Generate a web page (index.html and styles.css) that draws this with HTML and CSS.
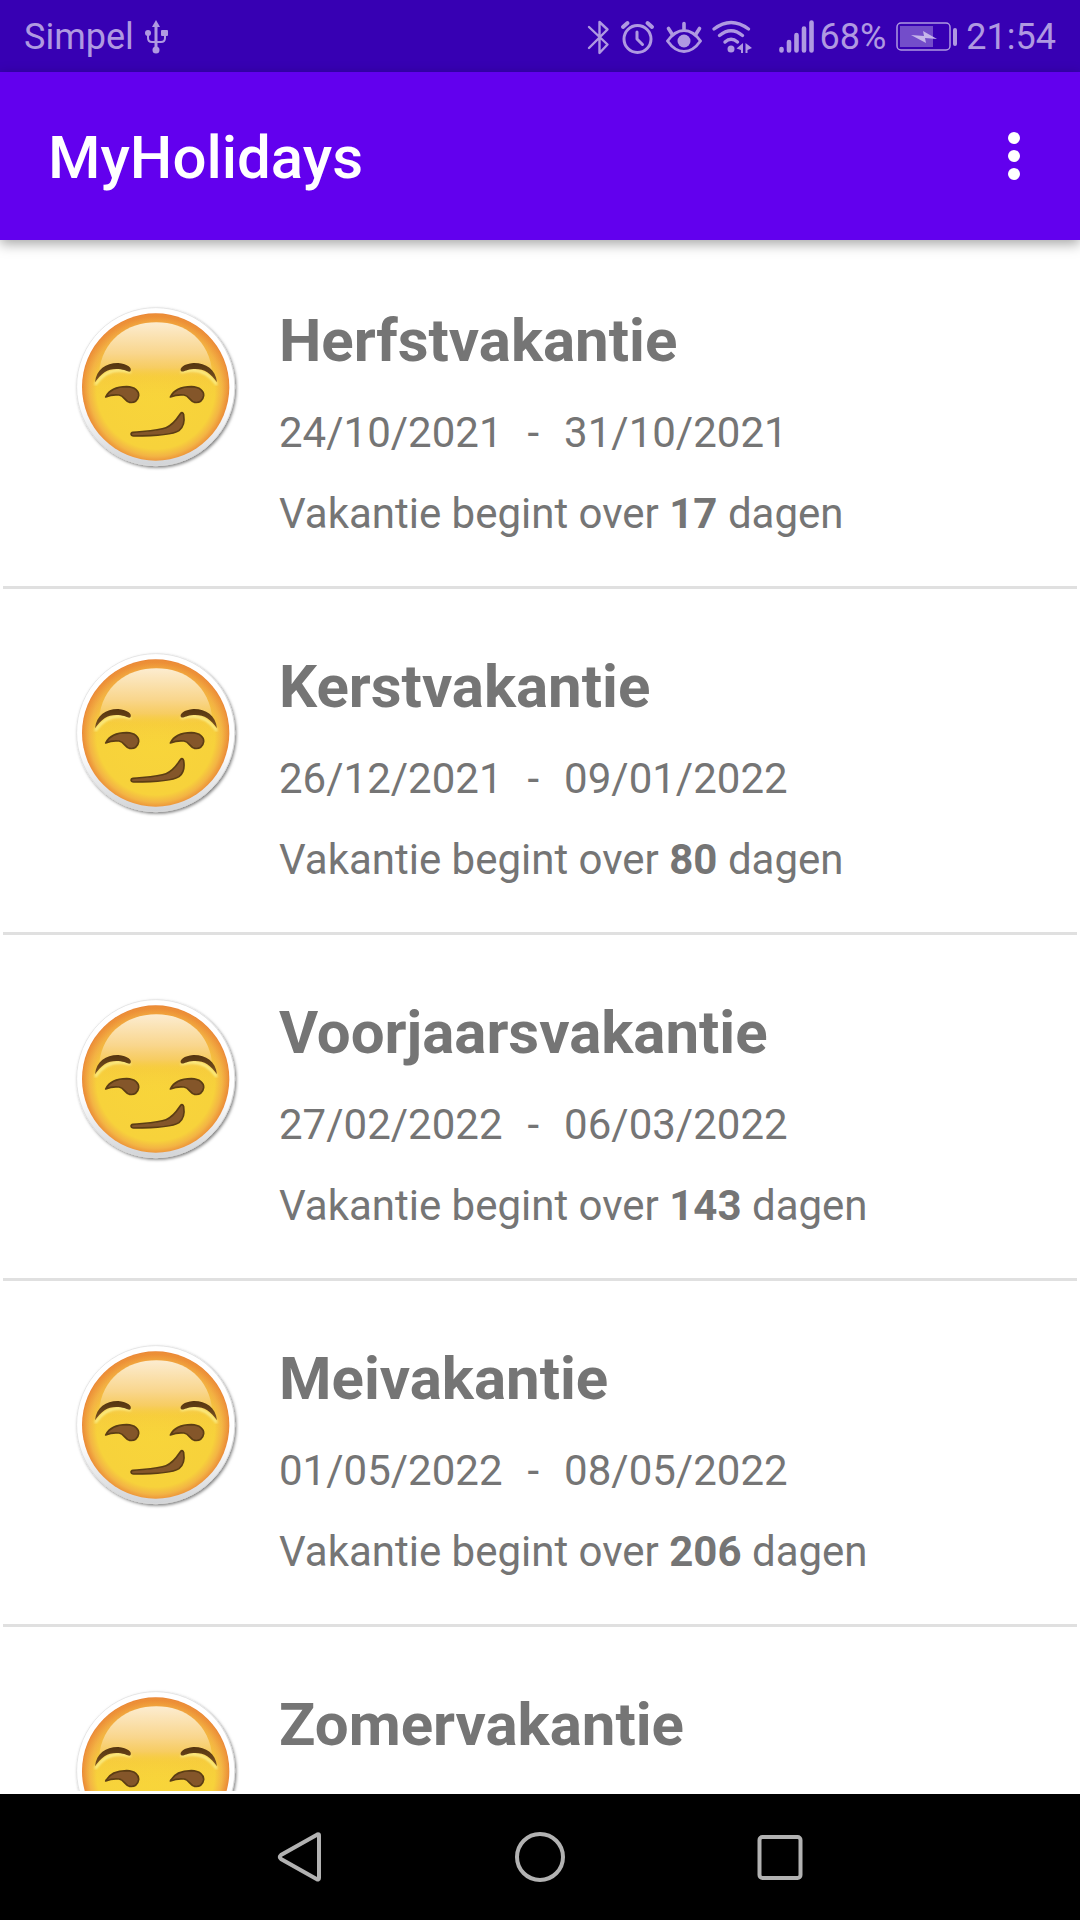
FILE: index.html
```html
<!DOCTYPE html>
<html lang="nl">
<head>
<meta charset="utf-8">
<meta name="viewport" content="width=device-width">
<title>MyHolidays</title>
<link rel="stylesheet" href="styles.css">
</head>
<body>
<svg class="defs" aria-hidden="true">
  <defs>
    <radialGradient id="skin" gradientUnits="userSpaceOnUse" cx="290" cy="300" r="221">
      <stop offset="0" stop-color="#f8d53a"/>
      <stop offset=".8" stop-color="#f7d23b"/>
      <stop offset=".9" stop-color="#f3b444"/>
      <stop offset="1" stop-color="#e98435"/>
    </radialGradient>
    <linearGradient id="forehead" x1="0" y1="0" x2="0" y2="1">
      <stop offset="0" stop-color="#f09a38" stop-opacity=".95"/>
      <stop offset=".35" stop-color="#f3ae42" stop-opacity=".7"/>
      <stop offset=".6" stop-color="#f7cb40" stop-opacity="0"/>
    </linearGradient>
    <linearGradient id="shine" x1="0" y1="0" x2="0" y2="1">
      <stop offset="0" stop-color="#fcecd0"/>
      <stop offset=".55" stop-color="#f9d68d"/>
      <stop offset=".8" stop-color="#f7cd66" stop-opacity=".9"/>
      <stop offset="1" stop-color="#f7cf40" stop-opacity="0"/>
    </linearGradient>
    <linearGradient id="rim" x1="0" y1="0" x2="0" y2="1">
      <stop offset=".6" stop-color="#fff"/>
      <stop offset="1" stop-color="#d2d4d7"/>
    </linearGradient>
    <linearGradient id="brow" x1="0" y1="0" x2="0" y2="1">
      <stop offset="0" stop-color="#54340f"/>
      <stop offset="1" stop-color="#7a5223"/>
    </linearGradient>
    <filter id="drop" x="-10%" y="-10%" width="120%" height="120%">
      <feDropShadow dx="4" dy="5" stdDeviation="4" flood-color="#000" flood-opacity=".5"/>
    </filter>
    <filter id="soft"><feGaussianBlur stdDeviation="3"/></filter>
  </defs>
  <symbol id="smirk" viewBox="36 39 504 504">
    <circle cx="290" cy="290" r="237" fill="url(#rim)" stroke="#dcdcdc" stroke-width="2" filter="url(#drop)"/>
    <circle cx="290" cy="291" r="221" fill="url(#skin)"/>
    <circle cx="290" cy="291" r="219" fill="url(#forehead)" opacity=".5"/>
    <path d="M120 250C128 150 205 97 292 97S452 150 460 250C410 272 170 272 120 250Z" fill="url(#shine)"/>
    <g fill="none" stroke="#fbf08a" stroke-width="7" stroke-linecap="round" filter="url(#soft)">
      <path d="M110 282Q150 226 213 246"/><path d="M368 246Q431 226 472 282"/>
    </g>
    <g fill="url(#brow)">
      <path d="M108 277C112 237 143 218 178 219C206 221 221 235 214 244C208 248 202 239 178 237C147 235 128 248 108 277Z"/>
      <path d="M474 277C470 237 439 218 403 219C375 221 360 235 366 243C372 248 380 239 403 237C434 235 454 248 474 277Z"/>
    </g>
    <g fill="#84562a" stroke="#5b3d14" stroke-width="5" stroke-linejoin="round">
      <path d="M140 321C151 299 176 290 203 290C229 291 240 303 239 317C237 333 226 339 212 337C198 335 196 317 180 315C164 313 154 315 140 321Z"/>
      <path d="M334 321C345 299 370 290 397 290C423 291 435 303 434 317C432 333 421 339 407 337C393 335 391 317 375 315C359 313 349 315 334 321Z"/>
      <path d="M222 427C260 423 298 422 321 413C345 403 354 386 364 371C369 365 373 368 374 375C377 393 373 412 360 422C340 435 270 438 224 438C214 438 214 428 222 427Z"/>
    </g>
  </symbol>
</svg>

<header class="status">
  <div class="status-group">
    <span>Simpel</span>
    <svg class="usb" width="24" height="36" viewBox="0 0 24 36" aria-hidden="true">
      <g fill="none" stroke="currentColor" stroke-width="2"><path d="M12 5V32" stroke-width="3"/><path d="M4 14V19Q4 23 8 23H17Q21 23 21 19V14"/></g>
      <g fill="currentColor"><path d="M12 1L16 8H8Z"/><circle cx="4" cy="14" r="3"/><rect x="17" y="11" width="7" height="6" rx="1"/><circle cx="12" cy="31" r="3.5"/></g>
    </svg>
  </div>
  <div class="status-group">
    <svg width="260" height="72" viewBox="0 0 260 72" class="signals" aria-hidden="true">
      <g fill="none" stroke="currentColor" stroke-linecap="round" stroke-linejoin="round" stroke-width="2.4">
        <path d="M19 26L37.500 43.500L29.500 52V21L37.500 28.500L19 47"/>
        <g stroke-width="3"><circle cx="67.500" cy="38" r="13.500"/><path d="M67 31V38L72.500 43.500"/><path d="M53 26L57.500 22M82 26L77.500 22" stroke-width="4"/></g>
        <g stroke-width="3"><path d="M97.500 40Q105 29.500 114 29.500T130.500 40Q123 50.500 114 50.500T97.500 40Z"/><path d="M114 28V22.500M102 33L98.500 27.500M126 33L129.500 27.500" stroke-width="3.600"/></g>
        <g stroke-width="3.400"><path d="M144 28Q161 15 178.500 28M149.500 34.500Q161 25 172.500 34.500M155 41Q161 35.500 167.500 41"/></g>
        <g stroke-width="4.600"><path d="M211.500 48V49.500M219 41V49.500M226.500 34V49.500M234 27.500V49.500M241.500 21.500V49.500"/></g>
      </g>
      <g fill="currentColor"><circle cx="114" cy="40" r="6.500"/><circle cx="161" cy="48" r="3.500"/><path d="M166.500 47.500L173 42V52H171V49ZM175.500 42L182 47L177.500 49V52H175.500Z"/></g>
    </svg>
    <span>68%</span>
    <svg class="battery" width="62" height="30" viewBox="0 0 62 30" aria-hidden="true">
      <rect x="1" y="1" width="53" height="27" rx="4" fill="none" stroke="currentColor" stroke-width="1.500"/>
      <rect x="4" y="4" width="33" height="21" fill="currentColor" opacity=".5"/>
      <path d="M15 13L28 14L27 9L41 17L29 16L30 21Z" fill="#c5b5ea"/>
      <rect x="57" y="6" width="4" height="18" rx="2" fill="currentColor"/>
    </svg>
    <span>21:54</span>
  </div>
</header>

<div class="appbar">
  <h1>MyHolidays</h1>
  <button class="more" type="button" aria-label="Meer opties">
    <svg width="12" height="48" viewBox="0 0 12 48" fill="currentColor" aria-hidden="true"><circle cx="6" cy="6" r="6"/><circle cx="6" cy="24" r="6"/><circle cx="6" cy="42" r="6"/></svg>
  </button>
</div>

<main class="content">
  <ul class="list">
    <li class="row">
      <svg class="face" aria-hidden="true"><use href="#smirk"/></svg>
      <div class="info"><h2>Herfstvakantie</h2><p class="dates"><span>24/10/2021</span><span>-</span><span>31/10/2021</span></p><p>Vakantie begint over <b>17</b> dagen</p></div>
    </li>
    <li class="row">
      <svg class="face" aria-hidden="true"><use href="#smirk"/></svg>
      <div class="info"><h2>Kerstvakantie</h2><p class="dates"><span>26/12/2021</span><span>-</span><span>09/01/2022</span></p><p>Vakantie begint over <b>80</b> dagen</p></div>
    </li>
    <li class="row">
      <svg class="face" aria-hidden="true"><use href="#smirk"/></svg>
      <div class="info"><h2>Voorjaarsvakantie</h2><p class="dates"><span>27/02/2022</span><span>-</span><span>06/03/2022</span></p><p>Vakantie begint over <b>143</b> dagen</p></div>
    </li>
    <li class="row">
      <svg class="face" aria-hidden="true"><use href="#smirk"/></svg>
      <div class="info"><h2>Meivakantie</h2><p class="dates"><span>01/05/2022</span><span>-</span><span>08/05/2022</span></p><p>Vakantie begint over <b>206</b> dagen</p></div>
    </li>
    <li class="row">
      <svg class="face" aria-hidden="true"><use href="#smirk"/></svg>
      <div class="info"><h2>Zomervakantie</h2></div>
    </li>
  </ul>
</main>

<nav class="navbar">
  <button type="button" aria-label="Terug"><svg width="50" height="50" viewBox="0 0 50 50" aria-hidden="true"><path d="M43.500 2.500Q44 2 44 4V46Q44 48.500 41.500 47L6 27Q3.500 25 6 23L41.500 3Q43 2 43.500 2.500Z"/></svg></button>
  <button type="button" aria-label="Start"><svg width="50" height="50" viewBox="0 0 50 50" aria-hidden="true"><circle cx="25" cy="25" r="23"/></svg></button>
  <button type="button" aria-label="Recente apps"><svg width="50" height="50" viewBox="0 0 50 50" aria-hidden="true"><rect x="4.500" y="5" width="41" height="41" rx="3"/></svg></button>
</nav>
</body>
</html>
```
FILE: styles.css
```css
* { box-sizing: border-box; }

body {
  margin: 0;
  height: 100vh;
  display: flex;
  flex-direction: column;
  overflow: hidden;
  background: #fff;
  color: #757575;
  font-family: Roboto, sans-serif;
}

h1, h2, p, ul { margin: 0; padding: 0; }

button {
  padding: 0;
  border: 0;
  background: none;
  color: inherit;
  display: flex;
  align-items: center;
  justify-content: center;
}

.defs { position: absolute; width: 0; height: 0; }

.status {
  flex: none;
  height: 72px;
  padding: 2px 24px 0;
  display: flex;
  align-items: center;
  justify-content: space-between;
  background: #3700b3;
  color: #af99e1;
  font-size: 36px;
  line-height: 44px;
}

.status-group { display: flex; align-items: center; }
.usb { margin-left: 10px; }
.signals { margin-right: -10px; }
.battery { margin: 0 8px 0 10px; }

.appbar {
  flex: none;
  position: relative;
  height: 168px;
  padding: 0 48px;
  display: flex;
  align-items: center;
  justify-content: space-between;
  background: #6200ee;
  color: #fff;
  box-shadow: 0 4px 12px rgba(0, 0, 0, .35);
}

.appbar h1 {
  padding-top: 4px;
  font-size: 60px;
  line-height: 70px;
  font-weight: 500;
}

.more { width: 36px; height: 96px; }

.content {
  flex: 1;
  min-height: 0;
  padding: 3px;
  display: flex;
  flex-direction: column;
}

.list {
  flex: 1;
  min-height: 0;
  overflow: hidden;
  list-style: none;
}

.row {
  display: flex;
  gap: 40px;
  padding: 60px 68px 48px;
  border-bottom: 3px solid #e0e0e0;
}

.face { flex: none; width: 168px; height: 168px; }

.info {
  display: flex;
  flex-direction: column;
  gap: 32px;
  padding-top: 3px;
}

.info h2 {
  font-size: 60px;
  line-height: 70px;
  font-weight: 700;
}

.info p {
  font-size: 42px;
  line-height: 49px;
}

.info .dates { display: flex; gap: 25px; }

.navbar {
  flex: none;
  height: 126px;
  display: flex;
  justify-content: center;
  background: #000;
  color: #b2b2b2;
}

.navbar button { width: 240px; }

.navbar svg {
  fill: none;
  stroke: currentColor;
  stroke-width: 4;
}
```
